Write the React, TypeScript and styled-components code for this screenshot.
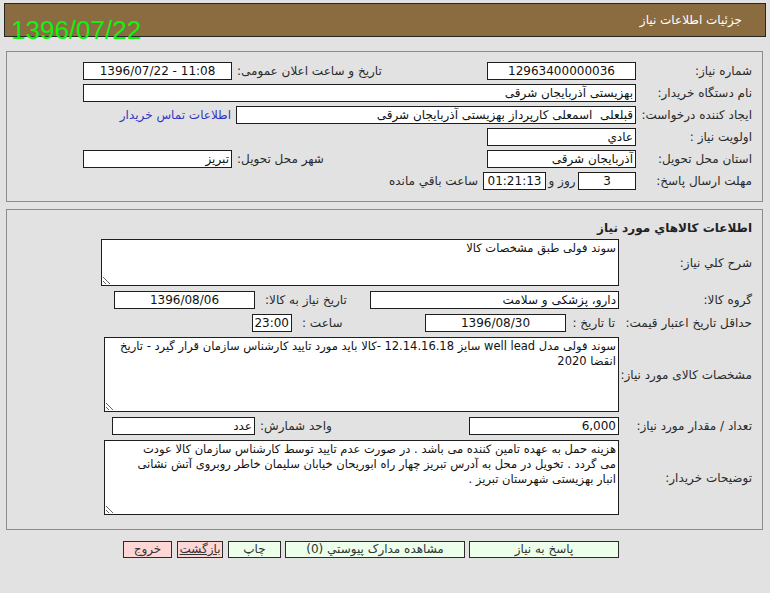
import React from 'react';
import styled, { createGlobalStyle } from 'styled-components';

const GlobalStyle = createGlobalStyle`
  html, body {
    margin: 0;
    padding: 0;
    background: #e2e2e2;
  }
  body {
    font-family: "DejaVu Sans", Tahoma, sans-serif;
    font-size: 12px;
    color: #222;
  }
`;

const Page = styled.div`
  position: relative;
  width: 770px;
  height: 593px;
  background: #e2e2e2;
  direction: rtl;
  overflow: hidden;
`;

const Header = styled.div`
  margin: 3px 4px 0 4px;
  height: 32px;
  background: #8b6b40;
  border: 1px solid #262626;
  display: flex;
  align-items: center;
  padding-right: 23px;
  color: #fff;
  font-size: 12px;
`;

// the green date stamp lies over the header bar
const DateStamp = styled.div`
  position: absolute;
  left: 11px;
  top: 17px;
  font-family: "Liberation Sans", Arial, sans-serif;
  font-size: 26px;
  line-height: 26px;
  color: #12f012;
  direction: ltr;
`;

const Panel = styled.div<{ $top: number; $pad: string }>`
  margin: ${(p) => p.$top}px 7px 0 6px;
  border: 1px solid #8c8c8c;
  padding: ${(p) => p.$pad};
`;

const Stack = styled.div`
  display: flex;
  flex-direction: column;
  gap: 5px;
`;

const Row = styled.div<{ $h?: number }>`
  display: flex;
  align-items: center;
  height: ${(p) => (p.$h ? `${p.$h}px` : 'auto')};
`;

const Label = styled.div<{ $w: number }>`
  flex: none;
  width: ${(p) => p.$w}px;
  white-space: nowrap;
  color: #2a2a2a;
`;

const SideLabel = styled.div<{ $w: number; $gap: number }>`
  flex: none;
  box-sizing: border-box;
  width: ${(p) => p.$w}px;
  padding-left: ${(p) => p.$gap}px;
  text-align: left;
  white-space: nowrap;
  color: #2a2a2a;
`;

const Inline = styled.div<{ $w: number; $align?: string }>`
  flex: none;
  box-sizing: border-box;
  width: ${(p) => p.$w}px;
  text-align: ${(p) => p.$align || 'center'};
  padding-right: ${(p) => (p.$align === 'right' ? '4px' : '0')};
  white-space: nowrap;
  color: #2a2a2a;
`;

const Field = styled.div<{ $w: number; $align?: string; $ltr?: boolean }>`
  flex: none;
  box-sizing: border-box;
  width: ${(p) => p.$w}px;
  height: 18px;
  background: #fff;
  border: 1px solid #1e1e1e;
  padding: 0 2px;
  line-height: 16px;
  text-align: ${(p) => p.$align || 'right'};
  direction: ${(p) => (p.$ltr ? 'ltr' : 'rtl')};
  white-space: nowrap;
  overflow: hidden;
  color: #111;
`;

const Note = styled.div`
  white-space: nowrap;
  color: #2a2a2a;
  margin-right: 5px;
`;

const ContactLink = styled.a`
  margin-right: 5px;
  color: #3434c4;
  text-decoration: none;
  white-space: nowrap;
`;

const Title = styled.div`
  font-weight: bold;
  line-height: 16px;
  margin-bottom: 3px;
  color: #222;
`;

const Area = styled.textarea<{ $w: number; $h: number }>`
  flex: none;
  box-sizing: border-box;
  width: ${(p) => p.$w}px;
  height: ${(p) => p.$h}px;
  margin: 0;
  border: 1px solid #1e1e1e;
  background: #fff;
  padding: 1px 2px;
  font-family: "DejaVu Sans", Tahoma, sans-serif;
  font-size: 11.5px;
  line-height: 15px;
  color: #111;
  direction: rtl;
  outline: none;
`;

const ButtonBar = styled.div`
  display: flex;
  margin-top: 11px;
  padding-right: 151px;
`;

const Button = styled.button<{ $w: number; $gap: number; $tone: 'green' | 'red'; $link?: boolean }>`
  flex: none;
  width: ${(p) => p.$w}px;
  height: 17px;
  margin: 0 0 0 ${(p) => p.$gap}px;
  padding: 0;
  border: 1px solid #2b2b2b;
  background: ${(p) => (p.$tone === 'green' ? '#ebffea' : '#ffd6d6')};
  font-family: "DejaVu Sans", Tahoma, sans-serif;
  font-size: 12px;
  line-height: 15px;
  color: #333;
  text-decoration: ${(p) => (p.$link ? 'underline' : 'none')};
`;

const specText =
  'سوند فولی مدل well lead سایز 12.14.16.18 -کالا باید مورد تایید کارشناس سازمان قرار گیرد - تاریخ\nانقضا 2020';

const buyerNote =
  'هزینه حمل به عهده تامین کننده می باشد . در صورت عدم تایید توسط کارشناس سازمان کالا عودت\nمی گردد . تخویل در محل به آدرس تبریز چهار راه ابوریحان خیابان سلیمان خاطر روبروی آتش نشانی\nانبار بهزیستی شهرستان تبریز .';

export default function App() {
  return (
    <Page>
      <GlobalStyle />
      <Header>جزئیات اطلاعات نیاز</Header>
      <DateStamp>1396/07/22</DateStamp>

      <Panel $top={14} $pad="8px 10px 9px 10px">
        <Row $h={22}>
          <Label $w={116}>شماره نیاز:</Label>
          <Field $w={149} $align="center">12963400000036</Field>
          <SideLabel $w={255} $gap={5}>تاریخ و ساعت اعلان عمومی:</SideLabel>
          <Field $w={149} $align="center" $ltr>1396/07/22 - 11:08</Field>
        </Row>
        <Row $h={22}>
          <Label $w={116}>نام دستگاه خریدار:</Label>
          <Field $w={553}>بهزیستی آذربایجان شرقی</Field>
        </Row>
        <Row $h={22}>
          <Label $w={116}>ایجاد کننده درخواست:</Label>
          <Field $w={400}>قبلعلی&nbsp; اسمعلی کارپرداز بهزیستی آذربایجان شرقی</Field>
          <ContactLink href="#">اطلاعات تماس خریدار</ContactLink>
        </Row>
        <Row $h={22}>
          <Label $w={116}>اولویت نیاز :</Label>
          <Field $w={149}>عادي</Field>
        </Row>
        <Row $h={22}>
          <Label $w={116}>استان محل تحویل:</Label>
          <Field $w={149}>آذربایجان شرقی</Field>
          <SideLabel $w={255} $gap={5}>شهر محل تحویل:</SideLabel>
          <Field $w={149}>تبریز</Field>
        </Row>
        <Row $h={22}>
          <Label $w={116}>مهلت ارسال پاسخ:</Label>
          <Field $w={58} $align="center">3</Field>
          <Inline $w={32}>روز و</Inline>
          <Field $w={63} $align="center">01:21:13</Field>
          <Note>ساعت باقي مانده</Note>
        </Row>
      </Panel>

      <Panel $top={7} $pad="10px 10px 14px 10px">
        <Title>اطلاعات کالاهاي مورد نیاز</Title>
        <Stack>
          <Row>
            <Label $w={133}>شرح کلي نیاز:</Label>
            <Area $w={518} $h={47} readOnly value="سوند فولی طبق مشخصات کالا" />
          </Row>
          <Row>
            <Label $w={133}>گروه کالا:</Label>
            <Field $w={249}>دارو، پزشکی و سلامت</Field>
            <SideLabel $w={115} $gap={10}>تاریخ نیاز به کالا:</SideLabel>
            <Field $w={141} $align="center">1396/08/06</Field>
          </Row>
          <Row>
            <Label $w={133}>حداقل تاریخ اعتبار قیمت:</Label>
            <Inline $w={53} $align="right">تا تاریخ :</Inline>
            <Field $w={141} $align="center">1396/08/30</Field>
            <SideLabel $w={133} $gap={10}>ساعت :</SideLabel>
            <Field $w={40} $align="center">23:00</Field>
          </Row>
          <Row>
            <Label $w={133}>مشخصات کالای مورد نیاز:</Label>
            <Area $w={515} $h={75} readOnly value={specText} />
          </Row>
          <Row>
            <Label $w={133}>تعداد / مقدار مورد نیاز:</Label>
            <Field $w={150}>6,000</Field>
            <SideLabel $w={214} $gap={5}>واحد شمارش:</SideLabel>
            <Field $w={143}>عدد</Field>
          </Row>
          <Row>
            <Label $w={133}>توضیحات خریدار:</Label>
            <Area $w={515} $h={75} readOnly value={buyerNote} />
          </Row>
        </Stack>
      </Panel>

      <ButtonBar>
        <Button $w={150} $gap={4} $tone="green">پاسخ به نیاز</Button>
        <Button $w={180} $gap={4} $tone="green">مشاهده مدارک پیوستي (0)</Button>
        <Button $w={53} $gap={5} $tone="green">چاپ</Button>
        <Button $w={46} $gap={5} $tone="red" $link>بازگشت</Button>
        <Button $w={49} $gap={0} $tone="red">خروج</Button>
      </ButtonBar>
    </Page>
  );
}
